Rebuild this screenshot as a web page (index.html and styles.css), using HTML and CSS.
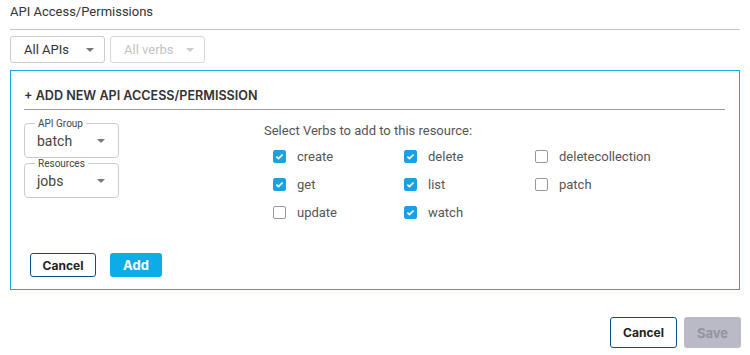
FILE: index.html
```html
<!DOCTYPE html>
<html>
<head>
    <title>API Access/Permissions</title>
    <meta charset="utf-8">
    <link rel="stylesheet" href="styles.css">
</head>
<body>
    <div class="page">
        <h2 class="page-title">API Access/Permissions</h2>

        <div class="filters">
            <div class="filter">All APIs <span class="caret"></span></div>
            <div class="filter disabled">All verbs <span class="caret"></span></div>
        </div>

        <div class="panel">
            <h3 class="panel-title">+ ADD NEW API ACCESS/PERMISSION</h3>

            <div class="panel-body">
                <div class="pickers">
                    <fieldset class="picker">
                        <legend>API Group</legend>
                        <div class="picker-value">batch <span class="caret"></span></div>
                    </fieldset>
                    <fieldset class="picker">
                        <legend>Resources</legend>
                        <div class="picker-value">jobs <span class="caret"></span></div>
                    </fieldset>
                </div>

                <div class="verbs">
                    <p class="verbs-title">Select Verbs to add to this resource:</p>
                    <div class="verb-grid">
                        <label class="verb"><span class="box checked"><svg viewBox="0 0 12 12"><path d="M2.6 6.2l2.3 2.2 4.5-4.6" /></svg></span>create</label>
                        <label class="verb"><span class="box checked"><svg viewBox="0 0 12 12"><path d="M2.6 6.2l2.3 2.2 4.5-4.6" /></svg></span>delete</label>
                        <label class="verb"><span class="box"></span>deletecollection</label>
                        <label class="verb"><span class="box checked"><svg viewBox="0 0 12 12"><path d="M2.6 6.2l2.3 2.2 4.5-4.6" /></svg></span>get</label>
                        <label class="verb"><span class="box checked"><svg viewBox="0 0 12 12"><path d="M2.6 6.2l2.3 2.2 4.5-4.6" /></svg></span>list</label>
                        <label class="verb"><span class="box"></span>patch</label>
                        <label class="verb"><span class="box"></span>update</label>
                        <label class="verb"><span class="box checked"><svg viewBox="0 0 12 12"><path d="M2.6 6.2l2.3 2.2 4.5-4.6" /></svg></span>watch</label>
                    </div>
                </div>
            </div>

            <div class="panel-actions">
                <button class="btn btn-outline btn-small">Cancel</button>
                <button class="btn btn-primary btn-small">Add</button>
            </div>
        </div>

        <div class="footer-actions">
            <button class="btn btn-outline btn-large">Cancel</button>
            <button class="btn btn-disabled btn-large">Save</button>
        </div>
    </div>
</body>
</html>
```

FILE: styles.css
```css
body {
    margin: 0;
    font-family: Roboto, "Liberation Sans", Arial, sans-serif;
    color: #444;
    background-color: #fff;
}
.page {
    width: 730px;
    padding: 0 10px;
}
.page-title {
    margin: 0;
    padding-top: 4px;
    padding-bottom: 9px;
    font-size: 13px;
    line-height: 16px;
    font-weight: normal;
    color: #333;
    border-bottom: 1px solid #c5c2cc;
}
.filters {
    display: flex;
    gap: 5px;
    margin-top: 6px;
}
.filter {
    box-sizing: border-box;
    width: 95px;
    height: 27px;
    padding: 0 10px 0 13px;
    border: 1px solid #ccc;
    border-radius: 3px;
    font-size: 13px;
    line-height: 25px;
    color: #333;
    display: flex;
    align-items: center;
    justify-content: space-between;
}
.filter.disabled {
    color: #c2c2c2;
    border-color: #d6d6d6;
}
.filter.disabled .caret {
    border-top-color: #ccc;
}
.caret {
    width: 0;
    height: 0;
    border-left: 4px solid transparent;
    border-right: 4px solid transparent;
    border-top: 4px solid #777;
}
.panel {
    box-sizing: border-box;
    margin-top: 7px;
    height: 220px;
    border: 1px solid #1aa7dd;
    padding: 0 14px 0 13px;
}
.panel-title {
    margin: 16px 0 0;
    padding-bottom: 5px;
    font-family: Inter, Roboto, "Liberation Sans", Arial, sans-serif;
    font-size: 12.6px;
    line-height: 17px;
    font-weight: 600;
    color: #333;
    border-bottom: 1px solid #999;
}
.panel-body {
    display: flex;
    margin-top: 10px;
}
.pickers {
    display: flex;
    flex-direction: column;
    margin-top: -2px;
    width: 95px;
}
.picker {
    box-sizing: border-box;
    margin: 0;
    padding: 1px 13px 5px 12px;
    min-width: 0;
    width: 95px;
    border: 1px solid #ccc;
    border-radius: 4px;
}
.picker legend {
    padding: 0 3px;
    margin-left: -2px;
    font-size: 10px;
    line-height: 11px;
    color: #444;
}
.picker-value {
    display: flex;
    align-items: center;
    justify-content: space-between;
    font-size: 14px;
    line-height: 22px;
    color: #444;
}
.verbs {
    margin-left: 145px;
}
.verbs-title {
    margin: 0;
    padding-top: 3px;
    font-size: 13px;
    line-height: 16px;
    color: #555;
}
.verb-grid {
    display: grid;
    grid-template-columns: 131px 131px 131px;
    grid-auto-rows: 28px;
    margin-top: 3px;
    margin-left: 9px;
}
.verb {
    display: flex;
    align-items: center;
    gap: 11px;
    font-size: 13px;
    color: #555;
}
.box {
    box-sizing: border-box;
    width: 13px;
    height: 13px;
    border: 1px solid #999;
    border-radius: 2px;
    display: flex;
}
.box.checked {
    background-color: #1ba1e2;
    border-color: #1ba1e2;
}
.box svg {
    width: 11px;
    height: 11px;
    fill: none;
    stroke: #fff;
    stroke-width: 1.8;
}
.panel-actions {
    display: flex;
    gap: 14px;
    margin-top: 27px;
    margin-left: 6px;
}
.btn {
    box-sizing: border-box;
    font-family: Inter, "Liberation Sans", Arial, sans-serif;
    font-weight: bold;
    border-radius: 3px;
    border: 1px solid transparent;
    padding: 0;
    cursor: pointer;
}
.btn-outline {
    background-color: #fff;
    border-color: #0d4f86;
    color: #222;
}
.btn-primary {
    background-color: #0aade8;
    color: #fff;
}
.btn-disabled {
    background-color: #babac6;
    color: #9393a1;
}
.btn-small {
    height: 24px;
    font-size: 12px;
}
.btn-small.btn-outline {
    width: 66px;
}
.btn-small.btn-primary {
    width: 52px;
    font-size: 13px;
}
.btn-large {
    height: 31px;
    font-size: 12px;
}
.btn-large.btn-outline {
    width: 67px;
}
.btn-large.btn-disabled {
    width: 57px;
    font-size: 13px;
}
.footer-actions {
    display: flex;
    justify-content: flex-end;
    gap: 7px;
    margin-top: 27px;
    margin-right: -1px;
}
```
